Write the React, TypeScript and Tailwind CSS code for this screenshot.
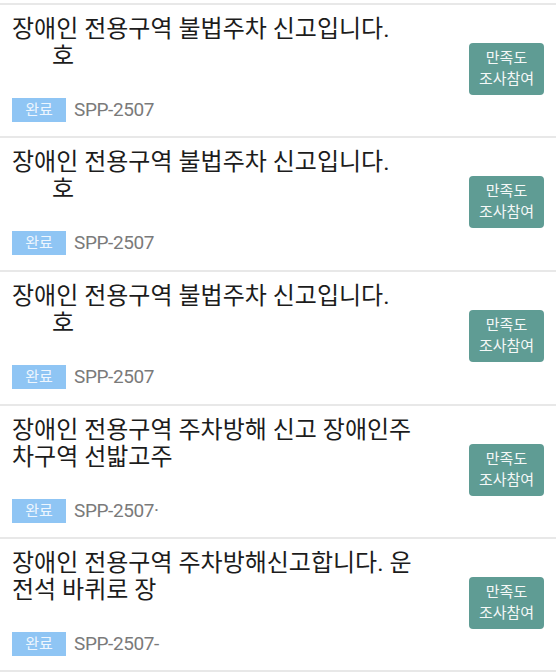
import React from 'react';

type Report = {
  id: number;
  title: string;
  second?: string;
  code: string;
  tall?: boolean;
};

const reports: Report[] = [
  { id: 1, title: '장애인 전용구역 불법주차 신고입니다.', second: '호', code: 'SPP-2507' },
  { id: 2, title: '장애인 전용구역 불법주차 신고입니다.', second: '호', code: 'SPP-2507', tall: true },
  { id: 3, title: '장애인 전용구역 불법주차 신고입니다.', second: '호', code: 'SPP-2507', tall: true },
  { id: 4, title: '장애인 전용구역 주차방해 신고 장애인주차구역 선밟고주', code: 'SPP-2507·' },
  { id: 5, title: '장애인 전용구역 주차방해신고합니다. 운전석 바퀴로 장', code: 'SPP-2507-' },
];

function ReportRow({ report }: { report: Report }) {
  return (
    <div
      className={`flex items-center border-b-2 border-[#e8e8e8] pl-3 pr-3 pt-[11px] ${
        report.tall ? 'pb-[15px]' : 'pb-[14px]'
      }`}
    >
      <div className="flex-1 min-w-0">
        <p className="w-[418px] h-[54px] overflow-hidden text-[24px] leading-[27px] text-[#1c1c1c]">
          {report.title}
          {report.second && (
            <>
              <br />
              <span className="pl-[40px]">{report.second}</span>
            </>
          )}
        </p>
        <div className="mt-[28px] flex items-center gap-2">
          <span className="flex h-[24px] w-[54px] items-center justify-center bg-[#8fc5f4] text-[15px] text-[#eef6fe]">
            완료
          </span>
          <span className="text-[19px] leading-[24px] tracking-[-0.4px] text-[#7a7a7a]">{report.code}</span>
        </div>
      </div>
      <button className="flex h-[52px] w-[75px] flex-col items-center justify-center rounded-[4px] bg-[#5f9c94] text-[15px] leading-[21px] text-[#f4f8f7]">
        <span>만족도</span>
        <span>조사참여</span>
      </button>
    </div>
  );
}

export default function App() {
  return (
    <div
      className="min-h-screen w-[558px] bg-white pt-[3px]"
      style={{ fontFamily: "Roboto, 'Noto Sans CJK KR', sans-serif" }}
    >
      <div className="mr-[2px] border-t-2 border-[#e8e8e8]">
        {reports.map((r) => (
          <ReportRow key={r.id} report={r} />
        ))}
      </div>
    </div>
  );
}
